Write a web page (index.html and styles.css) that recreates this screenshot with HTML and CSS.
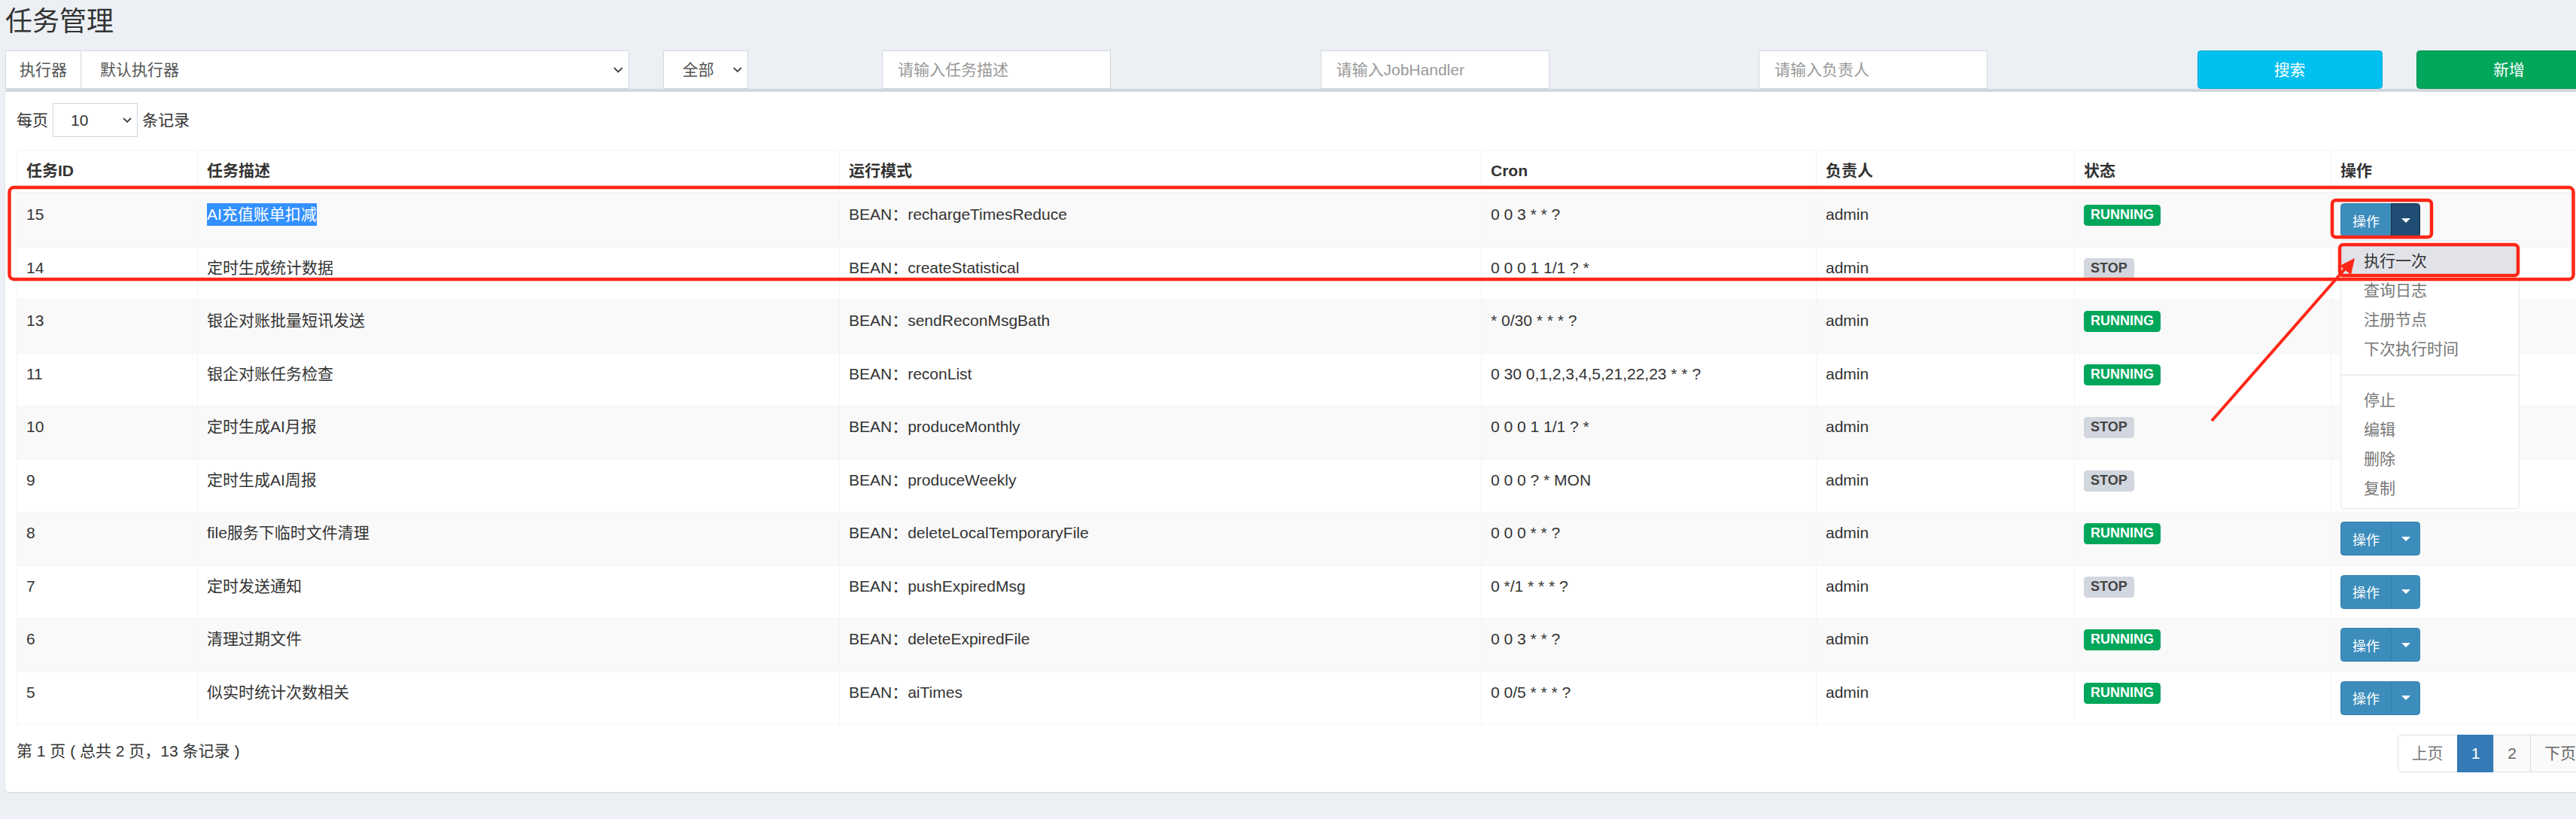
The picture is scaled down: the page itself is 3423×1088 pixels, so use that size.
FILE: index.html
```html
<!DOCTYPE html>
<html lang="zh-CN">
<head>
<meta charset="utf-8">
<title>任务管理</title>
<link rel="stylesheet" href="styles.css">
</head>
<body>
<div class="page">
  <section class="content-header"><h1>任务管理</h1></section>

  <div class="filters">
    <div class="col">
      <div class="input-group">
        <span class="addon">执行器</span>
        <div class="sel-wrap grow">
          <select class="form-select"><option>默认执行器</option></select>
          <svg class="chev" width="13" height="8" viewBox="0 0 13 8"><path d="M1 1l5.5 5.5L12 1" fill="none" stroke="#444" stroke-width="1.8"/></svg>
        </div>
      </div>
    </div>
    <div class="col">
      <div class="sel-wrap status">
        <select class="form-select"><option>全部</option></select>
        <svg class="chev" width="12" height="8" viewBox="0 0 12 8"><path d="M1 1l5 5 5-5" fill="none" stroke="#444" stroke-width="1.8"/></svg>
      </div>
    </div>
    <div class="col"><input class="form-input" type="text" placeholder="请输入任务描述"></div>
    <div class="col"><input class="form-input" type="text" placeholder="请输入JobHandler"></div>
    <div class="col"><input class="form-input" type="text" placeholder="请输入负责人"></div>
    <div class="col"><button class="btn btn-info">搜索</button></div>
    <div class="col"><button class="btn btn-success">新增</button></div>
  </div>

  <div class="box">
    <div class="box-body">
      <div class="length">
        <span>每页</span>
        <div class="sel-wrap len">
          <select class="form-select"><option>10</option></select>
          <svg class="chev" width="12" height="8" viewBox="0 0 12 8"><path d="M1 1l5 5 5-5" fill="none" stroke="#444" stroke-width="1.8"/></svg>
        </div>
        <span>条记录</span>
      </div>

      <table class="grid">
        <colgroup>
          <col class="c-id"><col class="c-desc"><col class="c-mode"><col class="c-cron"><col class="c-author"><col class="c-status"><col class="c-op">
        </colgroup>
        <thead>
          <tr><th>任务ID</th><th>任务描述</th><th>运行模式</th><th>Cron</th><th>负责人</th><th>状态</th><th>操作</th></tr>
        </thead>
        <tbody>
          <tr>
            <td>15</td><td><span class="sel">AI充值账单扣减</span></td><td>BEAN：rechargeTimesReduce</td><td>0 0 3 * * ?</td><td>admin</td>
            <td><span class="label label-run">RUNNING</span></td>
            <td>
              <div class="btn-group open">
                <button class="btn-op">操作</button><button class="btn-caret pressed"><span class="caret"></span></button>
                <ul class="dropdown-menu">
                  <li class="active"><a>执行一次</a></li>
                  <li><a>查询日志</a></li>
                  <li><a>注册节点</a></li>
                  <li><a>下次执行时间</a></li>
                  <li class="divider"></li>
                  <li><a>停止</a></li>
                  <li><a>编辑</a></li>
                  <li><a>删除</a></li>
                  <li><a>复制</a></li>
                </ul>
              </div>
            </td>
          </tr>
          <tr>
            <td>14</td><td>定时生成统计数据</td><td>BEAN：createStatistical</td><td>0 0 0 1 1/1 ? *</td><td>admin</td>
            <td><span class="label label-stop">STOP</span></td>
            <td><div class="btn-group covered"><button class="btn-op">操作</button><button class="btn-caret"><span class="caret"></span></button></div></td>
          </tr>
          <tr>
            <td>13</td><td>银企对账批量短讯发送</td><td>BEAN：sendReconMsgBath</td><td>* 0/30 * * * ?</td><td>admin</td>
            <td><span class="label label-run">RUNNING</span></td>
            <td><div class="btn-group covered"><button class="btn-op">操作</button><button class="btn-caret"><span class="caret"></span></button></div></td>
          </tr>
          <tr>
            <td>11</td><td>银企对账任务检查</td><td>BEAN：reconList</td><td>0 30 0,1,2,3,4,5,21,22,23 * * ?</td><td>admin</td>
            <td><span class="label label-run">RUNNING</span></td>
            <td><div class="btn-group covered"><button class="btn-op">操作</button><button class="btn-caret"><span class="caret"></span></button></div></td>
          </tr>
          <tr>
            <td>10</td><td>定时生成AI月报</td><td>BEAN：produceMonthly</td><td>0 0 0 1 1/1 ? *</td><td>admin</td>
            <td><span class="label label-stop">STOP</span></td>
            <td><div class="btn-group covered"><button class="btn-op">操作</button><button class="btn-caret"><span class="caret"></span></button></div></td>
          </tr>
          <tr>
            <td>9</td><td>定时生成AI周报</td><td>BEAN：produceWeekly</td><td>0 0 0 ? * MON</td><td>admin</td>
            <td><span class="label label-stop">STOP</span></td>
            <td><div class="btn-group covered"><button class="btn-op">操作</button><button class="btn-caret"><span class="caret"></span></button></div></td>
          </tr>
          <tr>
            <td>8</td><td>file服务下临时文件清理</td><td>BEAN：deleteLocalTemporaryFile</td><td>0 0 0 * * ?</td><td>admin</td>
            <td><span class="label label-run">RUNNING</span></td>
            <td><div class="btn-group"><button class="btn-op">操作</button><button class="btn-caret"><span class="caret"></span></button></div></td>
          </tr>
          <tr>
            <td>7</td><td>定时发送通知</td><td>BEAN：pushExpiredMsg</td><td>0 */1 * * * ?</td><td>admin</td>
            <td><span class="label label-stop">STOP</span></td>
            <td><div class="btn-group"><button class="btn-op">操作</button><button class="btn-caret"><span class="caret"></span></button></div></td>
          </tr>
          <tr>
            <td>6</td><td>清理过期文件</td><td>BEAN：deleteExpiredFile</td><td>0 0 3 * * ?</td><td>admin</td>
            <td><span class="label label-run">RUNNING</span></td>
            <td><div class="btn-group"><button class="btn-op">操作</button><button class="btn-caret"><span class="caret"></span></button></div></td>
          </tr>
          <tr>
            <td>5</td><td>似实时统计次数相关</td><td>BEAN：aiTimes</td><td>0 0/5 * * * ?</td><td>admin</td>
            <td><span class="label label-run">RUNNING</span></td>
            <td><div class="btn-group"><button class="btn-op">操作</button><button class="btn-caret"><span class="caret"></span></button></div></td>
          </tr>
        </tbody>
      </table>

      <div class="table-footer">
        <div class="info">第 1 页 ( 总共 2 页，13 条记录 )</div>
        <ul class="pagination">
          <li class="disabled"><a>上页</a></li>
          <li class="current"><a>1</a></li>
          <li><a>2</a></li>
          <li class="last"><a>下页</a></li>
        </ul>
      </div>
    </div>
  </div>

  <svg class="annot" width="3423" height="1088" viewBox="0 0 3423 1088">
    <rect x="12.5" y="249" width="3407" height="122" rx="6" fill="none" stroke="#ff2617" stroke-width="4.5"/>
    <rect x="3099" y="266" width="132" height="49" rx="5" fill="none" stroke="#ff2617" stroke-width="4.5"/>
    <rect x="3109" y="325" width="237" height="41" rx="5" fill="none" stroke="#ff2617" stroke-width="4.5"/>
    <line x1="2939" y1="559" x2="3117" y2="356" stroke="#ff2617" stroke-width="4"/>
    <polygon points="3129,343 3109,353 3124,365" fill="#ff2617"/>
  </svg>
</div>
</body>
</html>
```

FILE: styles.css
```css
html, body {
  margin: 0;
  padding: 0;
  overflow: hidden;
  background: #ecf0f5;
}

body {
  width: 3423px;
  height: 1088px;
  font-family: "Liberation Sans", "Noto Sans CJK SC", sans-serif;
  font-size: 21px;
  line-height: 30px;
  color: #333;
}

.page {
  position: relative;
  width: 3450px;
  padding-left: 7px;
}

/* header */
.content-header {
  height: 67px;
  box-sizing: border-box;
  padding-top: 9px;
}

.content-header h1 {
  margin: 0;
  font-size: 36px;
  line-height: 40px;
  font-weight: 400;
  color: #333;
}

/* filter bar */
.filters {
  display: grid;
  grid-template-columns: 873.75px 291.25px 582.5px 582.5px 582.5px 291.25px 291.25px;
  width: 3495px;
  margin-left: -22.5px;
  height: 51px;
}

.col {
  padding: 0 22.5px;
  min-width: 0;
}

.input-group {
  display: flex;
  height: 51px;
}

.addon {
  box-sizing: border-box;
  width: 100px;
  height: 51px;
  padding: 0 18px;
  border: 1px solid #d2d6de;
  border-right: 0;
  background: #fff;
  color: #555;
  line-height: 49px;
  white-space: nowrap;
}

.sel-wrap {
  position: relative;
}

.sel-wrap.grow {
  flex: 1;
}

.sel-wrap.status {
  width: 113px;
}

.sel-wrap.len {
  width: 113px;
}

.form-select {
  -webkit-appearance: none;
  appearance: none;
  box-sizing: border-box;
  width: 100%;
  height: 51px;
  margin: 0;
  padding: 0 30px 0 25px;
  border: 1px solid #d2d6de;
  border-radius: 0;
  background: #fff;
  font: inherit;
  color: #555;
  outline: none;
}

.sel-wrap.len .form-select {
  height: 45px;
  padding-left: 23px;
  color: #333;
}

.chev {
  position: absolute;
  right: 8px;
  top: 50%;
  margin-top: -4px;
  pointer-events: none;
}

.form-input {
  box-sizing: border-box;
  width: 304px;
  height: 51px;
  margin: 0;
  padding: 0 20px;
  border: 1px solid #d2d6de;
  border-radius: 0;
  background: #fff;
  font: inherit;
  color: #555;
  outline: none;
}

.form-input::placeholder {
  color: #999;
}

.btn {
  display: block;
  box-sizing: border-box;
  width: 100%;
  height: 51px;
  margin: 0;
  padding: 0;
  border: 1px solid transparent;
  border-radius: 4.5px;
  font: inherit;
  color: #fff;
  text-align: center;
}

.btn-info {
  background: #00c0ef;
  border-color: #00acd6;
}

.btn-success {
  background: #00a65a;
  border-color: #008d4c;
}

/* box */
.box {
  background: #fff;
  border-top: 4px solid #d2d6de;
  border-radius: 4.5px;
  box-shadow: 0 1px 2px rgba(0, 0, 0, 0.12);
}

.box-body {
  padding: 15px;
}

.length {
  display: flex;
  align-items: center;
  gap: 6px;
  height: 45px;
}

/* table */
.grid {
  width: 3420px;
  margin-top: 17px;
  table-layout: fixed;
  border-collapse: collapse;
  border: 1px solid #f4f4f4;
}

.c-id { width: 240px; }
.c-desc { width: 853px; }
.c-mode { width: 853px; }
.c-cron { width: 445px; }
.c-author { width: 343px; }
.c-status { width: 341px; }
.c-op { width: 345px; }

.grid th,
.grid td {
  border: 1px solid #f4f4f4;
  padding: 12px 12px 12.5px;
  text-align: left;
  vertical-align: top;
  line-height: 30px;
  white-space: nowrap;
}

.grid th {
  font-weight: 700;
  padding-bottom: 13px;
  border-bottom-width: 3px;
}

.grid tbody tr:nth-child(odd) {
  background: #f9f9f9;
}

.sel {
  display: inline-block;
  vertical-align: top;
  background: #3390ff;
  color: #fff;
}

.label {
  display: inline-block;
  vertical-align: top;
  margin-top: 2px;
  height: 28px;
  box-sizing: border-box;
  padding: 0 9px 2px;
  line-height: 26px;
  font-size: 18px;
  font-weight: 700;
  color: #fff;
  border-radius: 4.5px;
}

.label-run {
  background: #00a65a;
}

.label-stop {
  background: #d2d6de;
  color: #444;
}

/* op button group */
.btn-group {
  position: relative;
  display: inline-flex;
  vertical-align: top;
  height: 45px;
}

.btn-group.open {
  z-index: 10;
}

/* buttons hidden beneath the open dropdown */
.btn-group.covered {
  visibility: hidden;
}

.btn-op,
.btn-caret {
  box-sizing: border-box;
  height: 45px;
  margin: 0;
  border: 1px solid #367fa9;
  background: #3c8dbc;
  color: #fff;
  font-family: inherit;
  font-size: 18px;
}

.btn-op {
  padding: 0 15px;
  border-radius: 4.5px 0 0 4.5px;
}

.btn-caret {
  width: 39px;
  margin-left: -1px;
  padding: 0;
  border-radius: 0 4.5px 4.5px 0;
  display: flex;
  align-items: center;
  justify-content: center;
}

.btn-caret.pressed {
  background: #204d74;
  border-color: #122b40;
}

.caret {
  width: 0;
  height: 0;
  border-top: 6px solid #fff;
  border-left: 6px solid transparent;
  border-right: 6px solid transparent;
}

.dropdown-menu {
  position: absolute;
  top: 100%;
  left: 0;
  box-sizing: border-box;
  width: 238px;
  margin: 4px 0 0;
  padding: 7px 0;
  list-style: none;
  background: #fff;
  border: 1px solid #e6e6e6;
  border-radius: 4.5px;
}

.dropdown-menu li a {
  display: block;
  padding: 4.5px 30px;
  line-height: 30px;
  color: #777;
  white-space: nowrap;
}

.dropdown-menu li.active a {
  background: #e1e3e9;
  color: #333;
}

.dropdown-menu .divider {
  height: 2px;
  margin: 13.5px 0;
  background: #eee;
}

/* footer */
.table-footer {
  display: flex;
  justify-content: space-between;
  align-items: flex-start;
}

.info {
  padding-top: 20px;
}

.pagination {
  display: flex;
  margin: 13px 0 11px;
  padding: 0;
  list-style: none;
}

.pagination li a {
  display: block;
  padding: 9px 18px;
  line-height: 30px;
  margin-left: -1px;
  border: 1px solid #ddd;
  background: #fafafa;
  color: #666;
}

.pagination li.disabled a {
  margin-left: 0;
  background: #fff;
  color: #777;
  border-radius: 4.5px 0 0 4.5px;
}

.pagination li.current a {
  background: #337ab7;
  border-color: #337ab7;
  color: #fff;
}

.pagination li.last a {
  border-radius: 0 4.5px 4.5px 0;
}

/* red annotation layer */
.annot {
  position: absolute;
  left: 0;
  top: 0;
  z-index: 20;
  overflow: visible;
  pointer-events: none;
}
```
